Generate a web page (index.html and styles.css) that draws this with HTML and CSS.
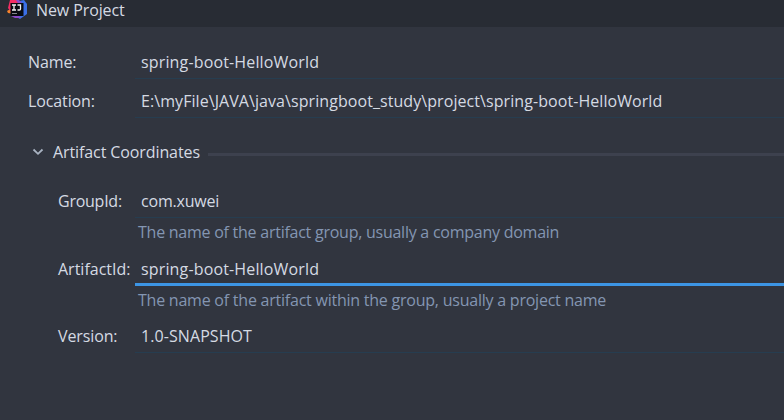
FILE: index.html
```html
<!DOCTYPE html>
<html lang="en">
<head>
<meta charset="utf-8">
<title>New Project</title>
<link rel="stylesheet" href="styles.css">
</head>
<body>
<header class="titlebar">
  <svg class="logo" width="20" height="20" viewBox="0 0 20 20">
    <path fill="#f7832b" d="M0 11l5-3 2 6-6-1z"/>
    <path fill="#f52d63" d="M3 0h7l5 7-11 5-3-4z"/>
    <path fill="#3b70e8" d="M12 1l5-1 3 4v10l-7 5-5-3z"/>
    <path fill="#8c49c9" d="M9 0h3l4 4-3 3zM4 16h8l2 2-6 0z"/>
    <path fill="#090b12" d="M3.500 3h13v13h-13z"/>
    <path fill="none" stroke="#f4f4f6" stroke-width="1.300" d="M5 5h4M7 5v5M5 10h4M10.500 5h3v4q0 1-1 1h-2"/>
    <path fill="#85858b" d="M5 13h5v1H5z"/>
  </svg>
  <h1 class="title">New Project</h1>
</header>
<main class="form">
  <div class="row name"><label>Name:</label><div class="field"><span class="value">spring-boot-HelloWorld</span></div></div>
  <div class="row location"><label>Location:</label><div class="field"><span class="value path">E:\myFile\JAVA\java\springboot_study\project\spring-boot-HelloWorld</span></div></div>
  <div class="section">
    <svg class="chevron" width="12" height="8" viewBox="0 0 12 8"><path d="M1.500 1.500L6 5.800l4.500-4.300" fill="none" stroke="#a9b3c2" stroke-width="1.800"/></svg>
    <h2>Artifact Coordinates</h2><span class="rule"></span>
  </div>
  <div class="coordinates">
    <div class="row"><label class="group-label">GroupId:</label><div class="field"><span class="value group">com.xuwei</span></div></div>
    <p class="hint hint-group">The name of the artifact group, usually a company domain</p>
    <div class="row artifact"><label class="artifact-label">ArtifactId:</label><div class="field focused"><span class="value">spring-boot-HelloWorld</span></div></div>
    <p class="hint hint-artifact">The name of the artifact within the group, usually a project name</p>
    <div class="row version"><label class="version-label">Version:</label><div class="field"><span class="value snapshot">1.0-SNAPSHOT</span></div></div>
  </div>
</main>
</body>
</html>
```
FILE: styles.css
```css
* { box-sizing: border-box; margin: 0; }
body {
  height: 420px;
  overflow: hidden;
  background: #31353f;
  color: #d5dae3;
  font: 16px/20px "Open Sans", "Noto Sans", sans-serif;
  white-space: nowrap;
}
h1, h2 { font: inherit; }
.titlebar { display: flex; height: 27px; padding-left: 7px; background: #282c34; }
.logo { flex: none; }
.title { margin-left: 9px; letter-spacing: -0.1px; }
.form { padding-top: 25px; }
.row { display: flex; height: 27px; }
.row label { width: 107px; margin-left: 28px; flex: none; letter-spacing: -0.12px; }
.field { flex: 1; min-width: 0; padding-left: 6px; border-bottom: 1px solid #263d50; }
.value { letter-spacing: 0.15px; }
.path { letter-spacing: 0.07px; }
.group { letter-spacing: -0.2px; }
.snapshot { letter-spacing: 0.08px; }
.location { margin-top: 12px; }
.section { display: flex; align-items: center; height: 20px; margin-top: 24px; padding-left: 32px; }
.section h2 { letter-spacing: -0.1px; }
.chevron { margin-right: 9px; flex: none; }
.rule { flex: 1; height: 3px; margin: 4px 0 0 8px; background: #3d414e; }
.coordinates { padding-top: 29px; }
.coordinates label { width: 77px; margin-left: 58px; }
.coordinates .group-label { letter-spacing: -0.25px; }
.coordinates .artifact-label { letter-spacing: 0; }
.hint { margin: 4px 0 0 138px; color: #8496b2; }
.hint-group { letter-spacing: -0.25px; }
.hint-artifact { letter-spacing: -0.23px; }
.artifact { margin-top: 17px; }
.focused { border-bottom: 3px solid #3c95e5; }
.version { margin-top: 16px; }
```
